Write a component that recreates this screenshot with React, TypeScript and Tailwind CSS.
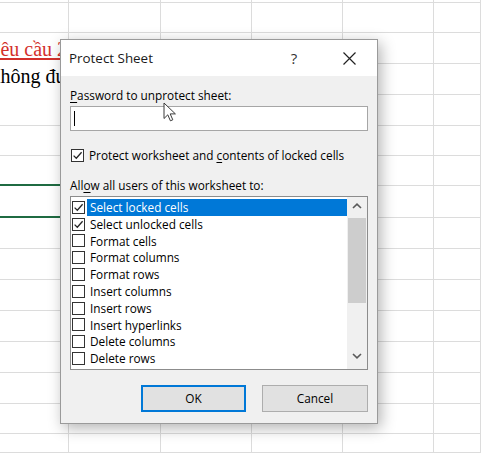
import React from "react";

const ROWS = 16;
const COLS = 6;

function cellClass(r: number, c: number): string {
  if (c === 0 && (r === 2 || r === 3)) return "relative border-r border-[#dcdcdc]";
  if (c === 0 && (r === 6 || r === 7)) return "relative border-r border-[#dcdcdc] border-b-2 border-b-[#1f6b42]";
  return "relative border-r border-b border-[#dcdcdc]";
}

function Check() {
  return (
    <svg width="11" height="11" viewBox="0 0 11 11">
      <path d="M1.6 5.6 L4.3 8.3 L9.6 2.2" fill="none" stroke="#262626" strokeWidth="1.3" />
    </svg>
  );
}

function Box({ checked }: { checked: boolean }) {
  return (
    <div className="w-[13px] h-[13px] shrink-0 border border-[#333333] bg-white flex items-center justify-center">
      {checked ? <Check /> : null}
    </div>
  );
}

const items: { label: string; checked: boolean }[] = [
  { label: "Select locked cells", checked: true },
  { label: "Select unlocked cells", checked: true },
  { label: "Format cells", checked: false },
  { label: "Format columns", checked: false },
  { label: "Format rows", checked: false },
  { label: "Insert columns", checked: false },
  { label: "Insert rows", checked: false },
  { label: "Insert hyperlinks", checked: false },
  { label: "Delete columns", checked: false },
  { label: "Delete rows", checked: false },
];

function Chevron({ up }: { up: boolean }) {
  return (
    <svg width="10" height="6" viewBox="0 0 10 6">
      <path d={up ? "M1 5 L5 1.2 L9 5" : "M1 1 L5 4.8 L9 1"} fill="none" stroke="#5a5a5a" strokeWidth="1.6" />
    </svg>
  );
}

export default function App() {
  const cells: React.ReactNode[] = [];
  for (let r = 0; r < ROWS; r++) {
    for (let c = 0; c < COLS; c++) {
      let content: React.ReactNode = null;
      if (r === 2 && c === 0) {
        content = (
          <div className="pt-[6px] -ml-[14px] whitespace-nowrap font-['Liberation_Serif',serif] text-[20px] leading-[20px] text-[#d3302b] underline decoration-[#d3302b] underline-offset-[2px]">
            Yêu cầu 2:
          </div>
        );
      }
      if (r === 3 && c === 0) {
        content = (
          <div className="pt-[2px] -ml-[14px] whitespace-nowrap font-['Liberation_Serif',serif] text-[20px] leading-[20px] text-black">
            Không được
          </div>
        );
      }
      cells.push(
        <div key={`${r}-${c}`} className={cellClass(r, c)}>
          {content}
        </div>
      );
    }
  }

  return (
    <div className="relative w-[481px] h-[453px] overflow-hidden bg-white">
      <div className="grid w-[481px] h-[453px] grid-cols-[69px_92px_91px_91px_91px_1fr] grid-rows-[3px_30px_31px_31px_31px_30px_30px_32px_31px_31px_31px_31px_31px_31px_30px_1fr]">
        {cells}
      </div>

      {/* Protect Sheet dialog */}
      <div className="absolute left-[60px] top-[39px] w-[318px] h-[385px] border border-[#9a9a9a] bg-[#f0f0f0] shadow-[3px_4px_14px_rgba(0,0,0,0.3)] flex flex-col font-['Open_Sans',sans-serif] text-[11.8px] text-black">
        <div className="h-[36px] bg-white flex items-center justify-between">
          <div className="pl-[8px] text-[13.4px] text-[#1a1a1a]">Protect Sheet</div>
          <div className="flex items-center gap-[9px] pr-[5px] h-full">
            <div className="w-[46px] h-full flex items-center justify-center text-[15px] text-[#333333]">?</div>
            <div className="w-[46px] h-full flex items-center justify-center">
              <svg width="13" height="13" viewBox="0 0 13 13">
                <path d="M0.5 0.5 L12.5 12.5 M12.5 0.5 L0.5 12.5" stroke="#222222" strokeWidth="1.2" />
              </svg>
            </div>
          </div>
        </div>

        <div className="flex flex-col px-[9px]">
          <div className="pt-[11px] h-[27px] leading-[16px]">
            <span className="underline underline-offset-[2px]">P</span>assword to unprotect sheet:
          </div>
          <div className="mt-[3px] h-[25px] border border-[#a6a6a6] bg-white">
            <div className="ml-[3px] mt-[4px] w-[1px] h-[15px] bg-black" />
          </div>

          <div className="mt-[16px] h-[16px] flex items-center gap-[5px] leading-[16px]">
            <div className="ml-[1px]">
              <Box checked={true} />
            </div>
            <span>
              Protect worksheet and <span className="underline underline-offset-[2px]">c</span>ontents of locked cells
            </span>
          </div>

          <div className="mt-[14px] h-[16px] leading-[16px]">
            All<span className="underline underline-offset-[2px]">o</span>w all users of this worksheet to:
          </div>

          <div className="mt-[3px] h-[174px] border border-[#8c8c8c] bg-white flex">
            <div className="flex-1 pt-[2px] flex flex-col">
              {items.map((it, i) => (
                <div key={it.label} className="h-[16.8px] flex items-center">
                  <div className="ml-[1px]">
                    <Box checked={it.checked} />
                  </div>
                  <div
                    className={
                      i === 0
                        ? "ml-[2px] flex-1 h-full pl-[3px] leading-[16.8px] bg-[#0078d7] text-white"
                        : "ml-[2px] flex-1 h-full pl-[3px] leading-[16.8px]"
                    }
                  >
                    {it.label}
                  </div>
                </div>
              ))}
            </div>
            <div className="w-[20px] bg-[#f0f0f0] flex flex-col">
              <div className="h-[18px] flex items-center justify-center">
                <Chevron up={true} />
              </div>
              <div className="mt-[3px] mx-[1px] h-[85px] bg-[#cdcdcd]" />
              <div className="flex-1" />
              <div className="mb-[4px] h-[18px] flex items-center justify-center">
                <Chevron up={false} />
              </div>
            </div>
          </div>

          <div className="mt-[15px] flex justify-end gap-[16px]">
            <div className="w-[105px] h-[27px] border-2 border-[#0078d7] bg-[#e1e1e1] flex items-center justify-center">
              OK
            </div>
            <div className="w-[106px] h-[27px] border border-[#adadad] bg-[#e1e1e1] flex items-center justify-center">
              Cancel
            </div>
          </div>
        </div>
      </div>

      {/* mouse pointer */}
      <svg className="absolute left-[163px] top-[102px]" width="14" height="21" viewBox="0 0 14 21">
        <path
          d="M1 1 L1 16.5 L4.8 12.8 L7.4 18.8 L9.8 17.8 L7.2 11.9 L12.4 11.9 Z"
          fill="#ffffff"
          stroke="#3a3a3a"
          strokeWidth="1"
          strokeLinejoin="round"
        />
      </svg>
    </div>
  );
}
